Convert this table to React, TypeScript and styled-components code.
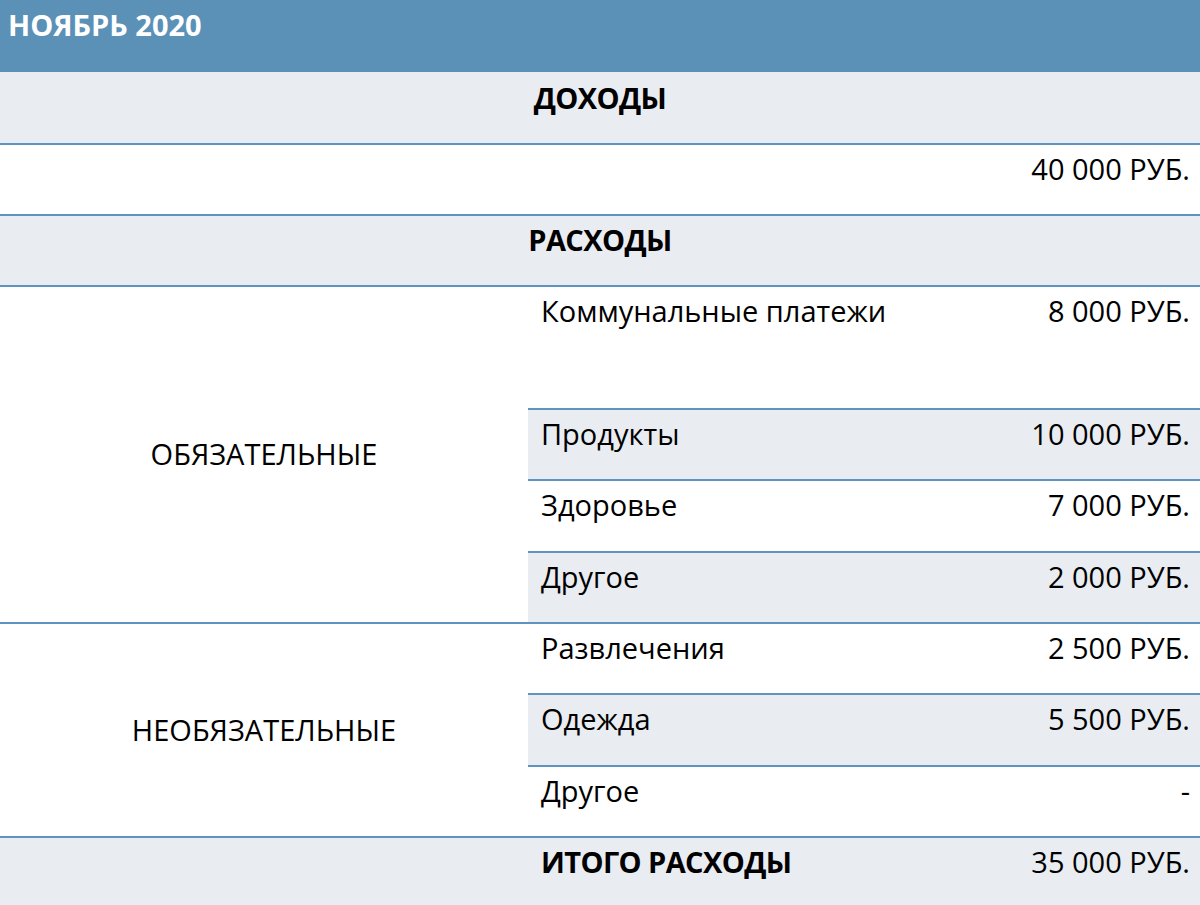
import styled, { createGlobalStyle } from 'styled-components'

const GlobalStyle = createGlobalStyle`
  body {
    margin: 0;
    background: #ffffff;
    font-family: 'Open Sans', 'Noto Sans', sans-serif;
    color: #000000;
  }
`

const LINE = '#5f94c1'
const SHADE = '#e9ecf1'

const Sheet = styled.div`
  width: 1200px;
  height: 905px;
  overflow: hidden;
  display: flex;
  flex-direction: column;
`

const TitleBar = styled.div`
  height: 72px;
  background: #5b91b7;
  color: #ffffff;
  font-weight: 700;
  font-size: 29px;
  line-height: 36px;
  padding: 7px 0 0 8px;
  box-sizing: border-box;
`

const Band = styled.div<{ $shaded?: boolean; $bordered?: boolean }>`
  height: 71px;
  box-sizing: border-box;
  background: ${(p) => (p.$shaded ? SHADE : '#ffffff')};
  border-top: ${(p) => (p.$bordered ? `2px solid ${LINE}` : 'none')};
  display: flex;
  justify-content: center;
  font-size: 29px;
  font-weight: 700;
  line-height: 36px;
  padding-top: ${(p) => (p.$bordered ? '6px' : '8px')};
  letter-spacing: -0.6px;
`

const ValueRow = styled.div`
  height: 71px;
  box-sizing: border-box;
  border-top: 2px solid ${LINE};
  display: flex;
  justify-content: flex-end;
  padding: 6px 10px 0 0;
  font-size: 29px;
  line-height: 36px;
`

const Group = styled.div`
  display: flex;
  border-top: 2px solid ${LINE};
`

const GroupLabel = styled.div`
  width: 528px;
  flex: none;
  display: flex;
  align-items: center;
  justify-content: center;
  font-size: 29px;
  padding-bottom: 2px;
`

const Items = styled.div`
  flex: 1;
  display: flex;
  flex-direction: column;
`

const Item = styled.div<{ $shaded?: boolean; $first?: boolean; $height: number }>`
  height: ${(p) => p.$height}px;
  box-sizing: border-box;
  background: ${(p) => (p.$shaded ? SHADE : '#ffffff')};
  border-top: ${(p) => (p.$first ? 'none' : `2px solid ${LINE}`)};
  display: flex;
  align-items: flex-start;
  justify-content: space-between;
  padding: ${(p) => (p.$first ? '6px' : '6px')} 10px 0 13px;
  font-size: 29px;
  line-height: 36px;
`

const TotalRow = styled.div`
  flex: 1;
  display: flex;
  background: ${SHADE};
  border-top: 2px solid ${LINE};
  padding: 6px 10px 0 0;
  font-size: 29px;
  line-height: 36px;
`

const TotalSpacer = styled.div`
  width: 541px;
  flex: none;
`

const TotalName = styled.div`
  flex: 1;
  font-weight: 700;
  letter-spacing: -0.6px;
`

type Entry = { name: string; amount: string }

const required: Entry[] = [
  { name: 'Коммунальные платежи', amount: '8 000 РУБ.' },
  { name: 'Продукты', amount: '10 000 РУБ.' },
  { name: 'Здоровье', amount: '7 000 РУБ.' },
  { name: 'Другое', amount: '2 000 РУБ.' },
]

const optional: Entry[] = [
  { name: 'Развлечения', amount: '2 500 РУБ.' },
  { name: 'Одежда', amount: '5 500 РУБ.' },
  { name: 'Другое', amount: '-' },
]

function ExpenseGroup({ label, entries, heights }: { label: string; entries: Entry[]; heights: number[] }) {
  return (
    <Group>
      <GroupLabel>{label}</GroupLabel>
      <Items>
        {entries.map((e, i) => (
          <Item key={i} $first={i === 0} $shaded={i % 2 === 1} $height={heights[i]}>
            <span>{e.name}</span>
            <span>{e.amount}</span>
          </Item>
        ))}
      </Items>
    </Group>
  )
}

export default function App() {
  return (
    <>
      <GlobalStyle />
      <Sheet>
        <TitleBar>НОЯБРЬ 2020</TitleBar>
        <Band $shaded>ДОХОДЫ</Band>
        <ValueRow>40 000 РУБ.</ValueRow>
        <Band $shaded $bordered>РАСХОДЫ</Band>
        <ExpenseGroup label="ОБЯЗАТЕЛЬНЫЕ" entries={required} heights={[121, 71, 72, 71]} />
        <ExpenseGroup label="НЕОБЯЗАТЕЛЬНЫЕ" entries={optional} heights={[69, 72, 71]} />
        <TotalRow>
          <TotalSpacer />
          <TotalName>ИТОГО РАСХОДЫ</TotalName>
          <span>35 000 РУБ.</span>
        </TotalRow>
      </Sheet>
    </>
  )
}
